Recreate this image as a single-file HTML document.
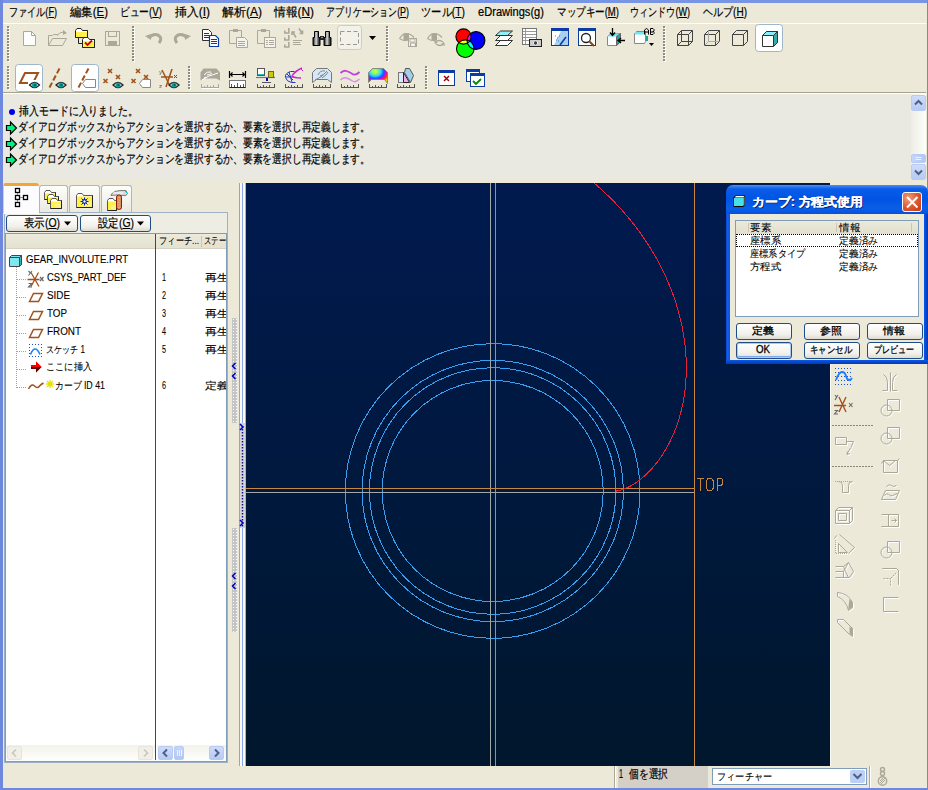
<!DOCTYPE html>
<html><head><meta charset="utf-8">
<style>
*{box-sizing:border-box}
html,body{margin:0;padding:0;width:928px;height:790px;overflow:hidden;background:#ece9d8;font-family:"Liberation Sans",sans-serif;font-size:12px;color:#000}
.a{position:absolute}
.f{position:absolute;white-space:nowrap;line-height:12px;height:12px;-webkit-text-stroke:0.2px currentColor}
.f.s{font-size:10px;-webkit-text-stroke:0.1px currentColor}
.f>span{display:inline-block;transform-origin:0 0;white-space:nowrap}
svg{position:absolute;overflow:visible}
</style></head><body>
<!-- window frame -->
<div class="a" style="left:0;top:0;width:928px;height:3px;background:#7795e2"></div>
<div class="a" style="left:0;top:0;width:3px;height:790px;background:#6d88de"></div>
<div class="a" style="left:927px;top:0;width:1px;height:790px;background:#6d88de"></div>
<div class="a" style="left:0;top:788px;width:928px;height:2px;background:#6d88de"></div>

<!-- MENU -->
<div id="menu">
<div class="f" style="left:9px;top:6px;width:48px"><span style="transform: scaleX(0.7578);">ファイル(<u>F</u>)</span></div>
<div class="f" style="left:70px;top:6px;width:38px"><span style="transform: scaleX(0.9496);">編集(<u>E</u>)</span></div>
<div class="f" style="left:120px;top:6px;width:42px"><span style="transform: scaleX(0.8074);">ビュー(<u>V</u>)</span></div>
<div class="f" style="left:175px;top:6px;width:35px"><span style="transform: scaleX(0.9903);">挿入(<u>I</u>)</span></div>
<div class="f" style="left:222px;top:6px;width:40px"><span style="transform: scaleX(0.9996);">解析(<u>A</u>)</span></div>
<div class="f" style="left:274px;top:6px;width:40px"><span style="transform: scaleX(0.9835);">情報(<u>N</u>)</span></div>
<div class="f" style="left:326px;top:6px;width:83px"><span style="transform: scaleX(0.741);">アプリケーション(<u>P</u>)</span></div>
<div class="f" style="left:421px;top:6px;width:44px"><span style="transform: scaleX(0.857);">ツール(<u>T</u>)</span></div>
<div class="f" style="left:478px;top:6px;width:66px"><span style="transform: scaleX(0.9247);">eDrawings(<u>g</u>)</span></div>
<div class="f" style="left:557px;top:6px;width:62px"><span style="transform: scaleX(0.7949);">マップキー(<u>M</u>)</span></div>
<div class="f" style="left:630px;top:6px;width:60px"><span style="transform: scaleX(0.7564);">ウィンドウ(<u>W</u>)</span></div>
<div class="f" style="left:703px;top:6px;width:44px"><span style="transform: scaleX(0.8354);">ヘルプ(<u>H</u>)</span></div>
</div>
<div class="a" style="left:3px;top:23px;width:923px;height:1px;background:#fff"></div>

<!-- TOOLBARS -->
<div id="tb">
<svg class="a" style="left:0;top:0" width="928" height="95" viewBox="0 0 928 95">
<defs>
<pattern id="grip" width="3" height="3" patternUnits="userSpaceOnUse"><rect x="1" y="1" width="2" height="2" fill="#fff"></rect><rect x="0" y="0" width="2" height="2" fill="#8e8c7e"></rect></pattern>
<g id="eye"><path d="M0 3 Q5 -2 10 3 Q5 8 0 3Z" fill="#fff" stroke="#222" stroke-width="1.3"></path><circle cx="5" cy="3" r="2.6" fill="#10a0a0"></circle><circle cx="5.5" cy="3.2" r="1.1" fill="#064"></circle></g>
<g id="ruler"><rect x="0.5" y="0.5" width="17" height="4" fill="#fff" stroke="#555"></rect><path d="M2.5 1v2M5.5 1v3M8.5 1v2M11.5 1v3M14.5 1v2" stroke="#555"></path></g>
</defs>
<!-- grippers row1 -->
<g shape-rendering="crispEdges"><rect x="8" y="27" width="2" height="2" fill="#fff"></rect><rect x="7" y="26" width="2" height="2" fill="#8e8c7e"></rect><rect x="8" y="30" width="2" height="2" fill="#fff"></rect><rect x="7" y="29" width="2" height="2" fill="#8e8c7e"></rect><rect x="8" y="33" width="2" height="2" fill="#fff"></rect><rect x="7" y="32" width="2" height="2" fill="#8e8c7e"></rect><rect x="8" y="36" width="2" height="2" fill="#fff"></rect><rect x="7" y="35" width="2" height="2" fill="#8e8c7e"></rect><rect x="8" y="39" width="2" height="2" fill="#fff"></rect><rect x="7" y="38" width="2" height="2" fill="#8e8c7e"></rect><rect x="8" y="42" width="2" height="2" fill="#fff"></rect><rect x="7" y="41" width="2" height="2" fill="#8e8c7e"></rect><rect x="8" y="45" width="2" height="2" fill="#fff"></rect><rect x="7" y="44" width="2" height="2" fill="#8e8c7e"></rect><rect x="8" y="48" width="2" height="2" fill="#fff"></rect><rect x="7" y="47" width="2" height="2" fill="#8e8c7e"></rect><rect x="8" y="51" width="2" height="2" fill="#fff"></rect><rect x="7" y="50" width="2" height="2" fill="#8e8c7e"></rect><rect x="8" y="54" width="2" height="2" fill="#fff"></rect><rect x="7" y="53" width="2" height="2" fill="#8e8c7e"></rect><rect x="8" y="57" width="2" height="2" fill="#fff"></rect><rect x="7" y="56" width="2" height="2" fill="#8e8c7e"></rect><rect x="8" y="60" width="2" height="2" fill="#fff"></rect><rect x="7" y="59" width="2" height="2" fill="#8e8c7e"></rect></g>
<g shape-rendering="crispEdges"><rect x="133" y="27" width="2" height="2" fill="#fff"></rect><rect x="132" y="26" width="2" height="2" fill="#8e8c7e"></rect><rect x="133" y="30" width="2" height="2" fill="#fff"></rect><rect x="132" y="29" width="2" height="2" fill="#8e8c7e"></rect><rect x="133" y="33" width="2" height="2" fill="#fff"></rect><rect x="132" y="32" width="2" height="2" fill="#8e8c7e"></rect><rect x="133" y="36" width="2" height="2" fill="#fff"></rect><rect x="132" y="35" width="2" height="2" fill="#8e8c7e"></rect><rect x="133" y="39" width="2" height="2" fill="#fff"></rect><rect x="132" y="38" width="2" height="2" fill="#8e8c7e"></rect><rect x="133" y="42" width="2" height="2" fill="#fff"></rect><rect x="132" y="41" width="2" height="2" fill="#8e8c7e"></rect><rect x="133" y="45" width="2" height="2" fill="#fff"></rect><rect x="132" y="44" width="2" height="2" fill="#8e8c7e"></rect><rect x="133" y="48" width="2" height="2" fill="#fff"></rect><rect x="132" y="47" width="2" height="2" fill="#8e8c7e"></rect><rect x="133" y="51" width="2" height="2" fill="#fff"></rect><rect x="132" y="50" width="2" height="2" fill="#8e8c7e"></rect><rect x="133" y="54" width="2" height="2" fill="#fff"></rect><rect x="132" y="53" width="2" height="2" fill="#8e8c7e"></rect><rect x="133" y="57" width="2" height="2" fill="#fff"></rect><rect x="132" y="56" width="2" height="2" fill="#8e8c7e"></rect><rect x="133" y="60" width="2" height="2" fill="#fff"></rect><rect x="132" y="59" width="2" height="2" fill="#8e8c7e"></rect></g>
<g shape-rendering="crispEdges"><rect x="387" y="27" width="2" height="2" fill="#fff"></rect><rect x="386" y="26" width="2" height="2" fill="#8e8c7e"></rect><rect x="387" y="30" width="2" height="2" fill="#fff"></rect><rect x="386" y="29" width="2" height="2" fill="#8e8c7e"></rect><rect x="387" y="33" width="2" height="2" fill="#fff"></rect><rect x="386" y="32" width="2" height="2" fill="#8e8c7e"></rect><rect x="387" y="36" width="2" height="2" fill="#fff"></rect><rect x="386" y="35" width="2" height="2" fill="#8e8c7e"></rect><rect x="387" y="39" width="2" height="2" fill="#fff"></rect><rect x="386" y="38" width="2" height="2" fill="#8e8c7e"></rect><rect x="387" y="42" width="2" height="2" fill="#fff"></rect><rect x="386" y="41" width="2" height="2" fill="#8e8c7e"></rect><rect x="387" y="45" width="2" height="2" fill="#fff"></rect><rect x="386" y="44" width="2" height="2" fill="#8e8c7e"></rect><rect x="387" y="48" width="2" height="2" fill="#fff"></rect><rect x="386" y="47" width="2" height="2" fill="#8e8c7e"></rect><rect x="387" y="51" width="2" height="2" fill="#fff"></rect><rect x="386" y="50" width="2" height="2" fill="#8e8c7e"></rect><rect x="387" y="54" width="2" height="2" fill="#fff"></rect><rect x="386" y="53" width="2" height="2" fill="#8e8c7e"></rect><rect x="387" y="57" width="2" height="2" fill="#fff"></rect><rect x="386" y="56" width="2" height="2" fill="#8e8c7e"></rect><rect x="387" y="60" width="2" height="2" fill="#fff"></rect><rect x="386" y="59" width="2" height="2" fill="#8e8c7e"></rect></g>
<g shape-rendering="crispEdges"><rect x="664" y="27" width="2" height="2" fill="#fff"></rect><rect x="663" y="26" width="2" height="2" fill="#8e8c7e"></rect><rect x="664" y="30" width="2" height="2" fill="#fff"></rect><rect x="663" y="29" width="2" height="2" fill="#8e8c7e"></rect><rect x="664" y="33" width="2" height="2" fill="#fff"></rect><rect x="663" y="32" width="2" height="2" fill="#8e8c7e"></rect><rect x="664" y="36" width="2" height="2" fill="#fff"></rect><rect x="663" y="35" width="2" height="2" fill="#8e8c7e"></rect><rect x="664" y="39" width="2" height="2" fill="#fff"></rect><rect x="663" y="38" width="2" height="2" fill="#8e8c7e"></rect><rect x="664" y="42" width="2" height="2" fill="#fff"></rect><rect x="663" y="41" width="2" height="2" fill="#8e8c7e"></rect><rect x="664" y="45" width="2" height="2" fill="#fff"></rect><rect x="663" y="44" width="2" height="2" fill="#8e8c7e"></rect><rect x="664" y="48" width="2" height="2" fill="#fff"></rect><rect x="663" y="47" width="2" height="2" fill="#8e8c7e"></rect><rect x="664" y="51" width="2" height="2" fill="#fff"></rect><rect x="663" y="50" width="2" height="2" fill="#8e8c7e"></rect><rect x="664" y="54" width="2" height="2" fill="#fff"></rect><rect x="663" y="53" width="2" height="2" fill="#8e8c7e"></rect><rect x="664" y="57" width="2" height="2" fill="#fff"></rect><rect x="663" y="56" width="2" height="2" fill="#8e8c7e"></rect><rect x="664" y="60" width="2" height="2" fill="#fff"></rect><rect x="663" y="59" width="2" height="2" fill="#8e8c7e"></rect></g>
<!-- grippers row2 -->
<g shape-rendering="crispEdges"><rect x="8" y="67" width="2" height="2" fill="#fff"></rect><rect x="7" y="66" width="2" height="2" fill="#8e8c7e"></rect><rect x="8" y="70" width="2" height="2" fill="#fff"></rect><rect x="7" y="69" width="2" height="2" fill="#8e8c7e"></rect><rect x="8" y="73" width="2" height="2" fill="#fff"></rect><rect x="7" y="72" width="2" height="2" fill="#8e8c7e"></rect><rect x="8" y="76" width="2" height="2" fill="#fff"></rect><rect x="7" y="75" width="2" height="2" fill="#8e8c7e"></rect><rect x="8" y="79" width="2" height="2" fill="#fff"></rect><rect x="7" y="78" width="2" height="2" fill="#8e8c7e"></rect><rect x="8" y="82" width="2" height="2" fill="#fff"></rect><rect x="7" y="81" width="2" height="2" fill="#8e8c7e"></rect><rect x="8" y="85" width="2" height="2" fill="#fff"></rect><rect x="7" y="84" width="2" height="2" fill="#8e8c7e"></rect><rect x="8" y="88" width="2" height="2" fill="#fff"></rect><rect x="7" y="87" width="2" height="2" fill="#8e8c7e"></rect></g>
<g shape-rendering="crispEdges"><rect x="189" y="67" width="2" height="2" fill="#fff"></rect><rect x="188" y="66" width="2" height="2" fill="#8e8c7e"></rect><rect x="189" y="70" width="2" height="2" fill="#fff"></rect><rect x="188" y="69" width="2" height="2" fill="#8e8c7e"></rect><rect x="189" y="73" width="2" height="2" fill="#fff"></rect><rect x="188" y="72" width="2" height="2" fill="#8e8c7e"></rect><rect x="189" y="76" width="2" height="2" fill="#fff"></rect><rect x="188" y="75" width="2" height="2" fill="#8e8c7e"></rect><rect x="189" y="79" width="2" height="2" fill="#fff"></rect><rect x="188" y="78" width="2" height="2" fill="#8e8c7e"></rect><rect x="189" y="82" width="2" height="2" fill="#fff"></rect><rect x="188" y="81" width="2" height="2" fill="#8e8c7e"></rect><rect x="189" y="85" width="2" height="2" fill="#fff"></rect><rect x="188" y="84" width="2" height="2" fill="#8e8c7e"></rect><rect x="189" y="88" width="2" height="2" fill="#fff"></rect><rect x="188" y="87" width="2" height="2" fill="#8e8c7e"></rect></g>
<g shape-rendering="crispEdges"><rect x="426" y="67" width="2" height="2" fill="#fff"></rect><rect x="425" y="66" width="2" height="2" fill="#8e8c7e"></rect><rect x="426" y="70" width="2" height="2" fill="#fff"></rect><rect x="425" y="69" width="2" height="2" fill="#8e8c7e"></rect><rect x="426" y="73" width="2" height="2" fill="#fff"></rect><rect x="425" y="72" width="2" height="2" fill="#8e8c7e"></rect><rect x="426" y="76" width="2" height="2" fill="#fff"></rect><rect x="425" y="75" width="2" height="2" fill="#8e8c7e"></rect><rect x="426" y="79" width="2" height="2" fill="#fff"></rect><rect x="425" y="78" width="2" height="2" fill="#8e8c7e"></rect><rect x="426" y="82" width="2" height="2" fill="#fff"></rect><rect x="425" y="81" width="2" height="2" fill="#8e8c7e"></rect><rect x="426" y="85" width="2" height="2" fill="#fff"></rect><rect x="425" y="84" width="2" height="2" fill="#8e8c7e"></rect><rect x="426" y="88" width="2" height="2" fill="#fff"></rect><rect x="425" y="87" width="2" height="2" fill="#8e8c7e"></rect></g>

<!-- new doc (disabled) -->
<path d="M23.5 31.5h8l4 4v10h-12z" fill="#fdfdfb" stroke="#aca899"></path><path d="M31.5 31.5v4h4" fill="none" stroke="#aca899"></path>
<!-- open folder disabled -->
<g fill="none" stroke="#aca899" stroke-width="1"><path d="M48.5 45.5v-10h4l1 -1h4v1"></path><path d="M48.5 45.5l4 -7h14l-4 7z"></path><path d="M57.5 35.5q2 -4 7 -3"></path></g><path d="M63 30l4 3l-4 2z" fill="#aca899"></path>
<!-- folder check -->
<path d="M78.5 37v6.5h4" fill="none" stroke="#222"></path>
<path d="M75.5 30.5l1.5 -2h4l1.5 2h5v7h-12z" fill="#fff" stroke="#222" stroke-width="1"></path><rect x="76" y="32" width="11" height="5.5" fill="#fff04a"></rect><path d="M75.5 37.5h12v-7" fill="none" stroke="#222" stroke-width="1"></path><path d="M82.5 39.5l1.5 -2h4l1.5 2h5v8h-12z" fill="#fff" stroke="#222" stroke-width="1"></path><rect x="83" y="41" width="11" height="6.5" fill="#fff04a"></rect><path d="M82.5 47.5h12v-8" fill="none" stroke="#222" stroke-width="1"></path>
<path d="M85 42.5l2.5 2.5l4.5 -4.5" fill="none" stroke="#c00" stroke-width="1.8"></path>
<!-- save disabled -->
<rect x="105.5" y="31.5" width="14" height="14" fill="none" stroke="#aca899"></rect><rect x="108.5" y="31.5" width="8" height="5" fill="none" stroke="#aca899"></rect><rect x="108" y="41" width="9" height="4" fill="#aca899"></rect>
<!-- undo / redo -->
<path d="M149 38 Q153 33 158 35 Q163 38 159 43" fill="none" stroke="#aca899" stroke-width="3"></path><path d="M145 36l6 -2v6z" fill="#aca899"></path>
<path d="M187 38 Q183 33 178 35 Q173 38 177 43" fill="none" stroke="#aca899" stroke-width="3"></path><path d="M191 36l-6 -2v6z" fill="#aca899"></path>
<!-- copy -->
<path d="M202.5 29.5h6l3 3v8h-9z" fill="#fff" stroke="#333"></path><path d="M204 33.5h5M204 35.5h5M204 37.5h5" stroke="#333"></path>
<path d="M209.5 35.5h6l3 3v8h-9z" fill="#fff" stroke="#0b3ba5" stroke-width="1.2"></path><path d="M211 39.5h6M211 41.5h6M211 43.5h6" stroke="#0b3ba5"></path>
<!-- paste disabled -->
<path d="M229.5 30.5h12v13h-12z" fill="none" stroke="#aca899"></path><rect x="233" y="29" width="5" height="3" fill="#aca899"></rect><path d="M236.5 37.5h8l3 3v7h-11z" fill="#f4f3ee" stroke="#aca899"></path><path d="M238 41.5h7M238 43.5h7M238 45.5h7" stroke="#aca899"></path>
<!-- paste special disabled -->
<path d="M257.5 30.5h12v13h-12z" fill="none" stroke="#aca899"></path><rect x="261" y="29" width="5" height="3" fill="#aca899"></rect><rect x="264.5" y="37.5" width="11" height="10" fill="#f4f3ee" stroke="#aca899"></rect><path d="M266 40.5h2M269 40.5h5M266 42.5h2M269 42.5h5M266 44.5h2M269 44.5h5" stroke="#aca899"></path>
<!-- checklist disabled -->
<g fill="none" stroke="#aca899" stroke-width="1.6"><path d="M284.8 30.5v2.5h4v-5M284.8 37.5v2.5h4v-5M284.8 44.5v2.5h4v-5"></path><path d="M296 37.5l-3 -5M292 35v-3h3"></path><path d="M299 28.5l3 4.5M299.5 33.5h3v-3"></path></g>
<path d="M293 40.5h9M293 42.5h7M293 44.5h8" stroke="#aca899" stroke-width="1"></path>
<!-- binoculars -->
<defs><linearGradient id="bino" x1="0" x2="1"><stop offset="0" stop-color="#111"></stop><stop offset="0.45" stop-color="#ddd"></stop><stop offset="0.7" stop-color="#666"></stop><stop offset="1" stop-color="#111"></stop></linearGradient></defs>
<path d="M314.5 31.5h4v6h1.5v8h-7v-8h1.5z" fill="url(#bino)" stroke="#000"></path>
<path d="M325.5 31.5h4v6h1.5v8h-7v-8h1.5z" fill="url(#bino)" stroke="#000"></path>
<rect x="320" y="36" width="4" height="4" fill="#222"></rect><circle cx="322" cy="37.5" r="0.8" fill="#bbb"></circle>
<!-- select box btn -->
<rect x="337.5" y="25.5" width="24" height="24" rx="3" fill="#f3f2ea" stroke="#cfccbb"></rect>
<rect x="340.5" y="31.5" width="18" height="13" fill="none" stroke="#9a988a" stroke-dasharray="4 2.5"></rect>
<path d="M369 36h7l-3.5 4z" fill="#000"></path>
<!-- eye save disabled -->
<path d="M399.5 38.5q3 -5 7 -5t7.5 4" fill="none" stroke="#aca899" stroke-width="1.2"></path><path d="M399.5 38.5q3 2 5 2" fill="none" stroke="#aca899" stroke-width="1.2"></path><path d="M403.5 33.5h5.5v6.5l-2 1h-3.5z" fill="#aca899"></path>
<rect x="408.5" y="38.5" width="8" height="8" fill="#f4f3ee" stroke="#aca899"></rect><rect x="410" y="39" width="5" height="3" fill="none" stroke="#aca899" stroke-width="0.8"></rect><path d="M410.5 46v-3h5v3" fill="none" stroke="#aca899"></path>
<path d="M427.5 38.5q3 -5 7 -5t7.5 4" fill="none" stroke="#aca899" stroke-width="1.2"></path><path d="M427.5 38.5q3 2 5 2" fill="none" stroke="#aca899" stroke-width="1.2"></path><path d="M431.5 33.5h5.5v6.5l-2 1h-3.5z" fill="#aca899"></path>
<path d="M435 42q4 -3 8 0M444 44q-4 3 -8 0" fill="none" stroke="#aca899" stroke-width="1.4"></path><path d="M434 40l1 4l3 -2zM445 46l-1 -4l-3 2z" fill="#aca899"></path>
<!-- color circles -->
<defs><clipPath id="cR"><circle cx="463.5" cy="36.5" r="7.6"></circle></clipPath><clipPath id="cB"><circle cx="476" cy="40.5" r="8.9"></circle></clipPath></defs>
<circle cx="463.5" cy="36.5" r="7.6" fill="#f00"></circle>
<circle cx="476" cy="40.5" r="8.9" fill="#00f"></circle>
<circle cx="465.3" cy="48.7" r="8.8" fill="#0f0"></circle>
<g clip-path="url(#cR)"><circle cx="476" cy="40.5" r="8.9" fill="#f0f"></circle><circle cx="465.3" cy="48.7" r="8.8" fill="#ff0"></circle></g>
<g clip-path="url(#cB)"><circle cx="465.3" cy="48.7" r="8.8" fill="#0ff"></circle><g clip-path="url(#cR)"><circle cx="465.3" cy="48.7" r="8.8" fill="#fff"></circle></g></g>
<g fill="none" stroke="#000" stroke-width="1.1"><circle cx="463.5" cy="36.5" r="7.6"></circle><circle cx="476" cy="40.5" r="8.9"></circle><circle cx="465.3" cy="48.7" r="8.8"></circle></g>
<!-- layers -->
<path d="M495.5 45.5l5 -5h12l-5 5z" fill="#fff" stroke="#333"></path><path d="M495.5 40.5l5 -5h12l-5 5z" fill="#fff" stroke="#333"></path><path d="M495.5 35.5l5 -4.5h12l-5 4.5z" fill="#90f0f8" stroke="#333"></path>
<!-- table camera -->
<rect x="522.5" y="28.5" width="14" height="16" fill="#fff" stroke="#777"></rect><path d="M523 31.5h13M523 34.5h13M523 37.5h13M523 40.5h13M525.5 29v15" stroke="#999"></path><rect x="529.5" y="39.5" width="12" height="7" fill="#ccc" stroke="#222"></rect><circle cx="535.5" cy="43" r="2.2" fill="#444" stroke="#eee"></circle>
<!-- blue window -->
<rect x="551.5" y="28.5" width="17" height="17" fill="#a8d0f0" stroke="#0b3ba5"></rect><rect x="551" y="28" width="18" height="3" fill="#0b3ba5"></rect><path d="M552 31h9l-7 14h-2z" fill="#fff"></path><path d="M560 45l6 -8" stroke="#0b3ba5" stroke-width="1.5"></path><path d="M555 36h1M557 38h1M559 36h1M556 40h1M558 41h1" stroke="#2a7ad0"></path>
<!-- zoom window -->
<rect x="578.5" y="28.5" width="17" height="17" fill="#fff" stroke="#0b3ba5"></rect><rect x="578" y="28" width="18" height="3" fill="#0b3ba5"></rect><circle cx="586" cy="38" r="4.5" fill="none" stroke="#222" stroke-width="1.3"></circle><path d="M589 41l5 5" stroke="#8b4513" stroke-width="2"></path>
<!-- arrow cube -->
<path d="M607.5 36.5l3 -3h10v8l-3.5 4h-9.5z" fill="#fff" stroke="#888"></path><path d="M607.5 36.5l3 -3h10l-3.5 3z" fill="#6ee8f0"></path><path d="M616.5 36.5l4 -3v8l-4 4z" fill="#20a0a0" stroke="#666"></path>
<path d="M612.5 28v7M610 32.5l2.5 3l2.5 -3" fill="none" stroke="#000" stroke-width="1.3"></path><path d="M625 40.5h-7M621 38l-3 2.5l3 2.5" fill="none" stroke="#000" stroke-width="1.3"></path>
<!-- AB cube -->
<path d="M634.5 33.5l2 -2h9v10l-1 2h-10z" fill="#fff" stroke="#888"></path><rect x="635" y="32" width="10" height="2.5" fill="#6ee8f0"></rect><rect x="646" y="36" width="2" height="5" fill="#20a0a0"></rect>
<path d="M644.5 34.5v-4.5l2 -1.5l2 1.5v4.5M644.5 32h4M650.5 34.5v-6h2.5l1 1v1.5l-1 1h-2.5M653 31.5l1 1v1l-1 1h-2.5" fill="none" stroke="#000" stroke-width="1"></path>
<path d="M649 43h5l-2.5 3z" fill="#000"></path>
<!-- wireframe cubes -->
<g fill="none" stroke="#444"><path d="M677.5 34.5h11v11h-11z M681.5 30.5h11v11h-11z M677.5 34.5l4 -4M688.5 34.5l4 -4M677.5 45.5l4 -4M688.5 45.5l4 -4"></path></g>
<g fill="none" stroke="#444"><path d="M704.5 34.5h11v11h-11z M704.5 34.5l4 -4h11v11l-4 4M715.5 34.5l4 -4"></path><path d="M708.5 30.5v11h11M704.5 45.5l4 -4" stroke="#aaa"></path></g>
<g fill="none" stroke="#444"><path d="M732.5 34.5h11v11h-11z M732.5 34.5l4 -4h11v11l-4 4M743.5 34.5l4 -4"></path></g>
<!-- shaded btn -->
<rect x="755.5" y="24.5" width="27" height="27" rx="3" fill="#fff" stroke="#9eb6cc"></rect>
<path d="M762.5 35.5l4 -4h11v11l-4 4h-11z" fill="#fff" stroke="#333"></path><path d="M762.5 35.5l4 -4h11l-4 4z" fill="#8ef" stroke="#333"></path><path d="M773.5 35.5l4 -4v11l-4 4z" fill="#3aa" stroke="#333"></path>

<!-- ROW 2 -->
<rect x="15.5" y="64.5" width="27" height="27" rx="3" fill="#fff" stroke="#9eb6cc"></rect>
<path d="M20 83l5 -10h13l-5 10z" fill="none" stroke="#a0521e" stroke-width="2"></path><rect x="28" y="80" width="12" height="8" fill="#fff"></rect>
<use href="#eye" x="29.5" y="82"></use>
<path d="M59.5 68.5l-10 19" stroke="#a0521e" stroke-width="2" stroke-dasharray="5.5 2.5"></path><use href="#eye" x="56" y="82"></use>
<rect x="71.5" y="64.5" width="27" height="27" rx="3" fill="#fff" stroke="#9eb6cc"></rect>
<path d="M88.5 68.5l-10 19" stroke="#a0521e" stroke-width="2" stroke-dasharray="5.5 2.5"></path><path d="M82.5 83.5l3 -4h10v8h-10z" fill="#fff" stroke="#888"></path>
<g stroke="#a0521e" stroke-width="1.6"><path d="M108 69l4 4M112 69l-4 4M116 75l4 4M120 75l-4 4M103.5 79l4 4M107.5 79l-4 4"></path></g><use href="#eye" x="113" y="82"></use>
<g stroke="#a0521e" stroke-width="1.6"><path d="M136 69l4 4M140 69l-4 4M144 75l4 4M148 75l-4 4M131.5 79l4 4M135.5 79l-4 4"></path></g><path d="M139.5 83.5l3 -4h8v8h-8z" fill="#fff" stroke="#888"></path>
<path d="M161 77h12M172 69l-6 18M162 70l8 16" stroke="#a0521e" stroke-width="1.5"></path><text x="159" y="74" font-size="6" fill="#555" font-family="Liberation Sans">y</text><text x="159" y="88" font-size="6" fill="#555" font-family="Liberation Sans">z</text><path d="M174 75l3 3M177 75l-3 3" stroke="#555"></path><use href="#eye" x="169" y="82"></use>
<!-- disabled dome ruler -->
<path d="M200.5 80.5v-8l3 -4h13l3.5 4v8l-4 -2h-12z" fill="#aca899"></path><path d="M204 75q3 -4 7 -3M207 75q3 0 5 -2M202 80q5 -4 16 -7M204 78l2 -1" fill="none" stroke="#fff" stroke-width="1"></path>
<path d="M201.5 87.5h17M201.5 84v4M204.5 86v2M207.5 85v3M210.5 86v2M213.5 85v3M218.5 84v4" stroke="#aca899" fill="none"></path><path d="M202 88.5h17" stroke="#fff"></path>
<!-- measure -->
<path d="M229.5 71v7M245.5 71v7M230 74.5h15M232.5 72.5l-2 2l2 2M242.5 72.5l2 2l-2 2" fill="none" stroke="#000" stroke-width="1.2"></path>
<rect x="229.5" y="80.5" width="16" height="7" fill="#fff" stroke="#777"></rect><path d="M229.5 87.5h16" stroke="#222"></path><path d="M231.5 84v3M234.5 85v2M237.5 83v4M240.5 85v2M243.5 84v3" stroke="#555"></path>
<!-- computer -->
<rect x="257.5" y="68.5" width="7" height="7" fill="#fff" stroke="#555"></rect><rect x="258" y="74" width="6" height="1" fill="#2bb"></rect><path d="M256 77.5h19" stroke="#777" stroke-width="1.2"></path><rect x="268.5" y="71.5" width="5" height="6" fill="#cc0" stroke="#663"></rect><path d="M267 78v3" stroke="#10a" stroke-width="2"></path><path d="M262 82.5h9" stroke="#555"></path>
<path d="M257.5 87.5h17M257.5 84v4M260.5 86v2M263.5 85v3M266.5 86v2M269.5 85v3M274.5 84v4" stroke="#555" fill="none"></path>
<!-- curve analysis -->
<path d="M290.5 71.5q-6 2 -5 6q1 4 6 5M290.5 71.5l4 0M291.5 82.5h4M287 74l6 6M286 77h8M289 72l3 10" fill="none" stroke="#1a3acc" stroke-width="1"></path><path d="M292 76q3 -5 10 -8M292 76q2 2 9 2" fill="none" stroke="#d020d0" stroke-width="1.4"></path><path d="M300 68l3 3" stroke="#d020d0"></path>
<path d="M285.5 87.5h17M285.5 84v4M288.5 86v2M291.5 85v3M294.5 86v2M297.5 85v3M302.5 84v4" stroke="#555" fill="none"></path>
<!-- blue dome -->
<path d="M312.5 82.5v-10l4 -4h11l4 4v10l-4 -3h-11z" fill="#d4e8fa" stroke="#777"></path><path d="M318 75q2 -5 7 -4M320 76q4 -1 6 -4M315 80q8 -3 12 -9M322 78q5 -3 6 -6" fill="none" stroke="#888" stroke-width="1"></path>
<path d="M313.5 87.5h17M313.5 84v4M316.5 86v2M319.5 85v3M322.5 86v2M325.5 85v3M330.5 84v4" stroke="#555" fill="none"></path>
<!-- waves -->
<path d="M340.5 73q3 -3 6 -2t6 3t7 -2" fill="none" stroke="#c040e0" stroke-width="1.8"></path><path d="M340.5 80q3 -3 6 -2t6 3t7 -2" fill="none" stroke="#d890e8" stroke-width="1.5"></path>
<path d="M341.5 87.5h17M341.5 84v4M344.5 86v2M347.5 85v3M350.5 86v2M353.5 85v3M358.5 84v4" stroke="#555" fill="none"></path>
<!-- color dome -->
<defs><radialGradient id="cdome" cx="0.35" cy="0.2" r="0.9"><stop offset="0" stop-color="#ff0"></stop><stop offset="0.18" stop-color="#7f7"></stop><stop offset="0.35" stop-color="#3cf"></stop><stop offset="0.5" stop-color="#06f"></stop><stop offset="0.62" stop-color="#c0f"></stop><stop offset="0.75" stop-color="#f30"></stop><stop offset="0.9" stop-color="#fc0"></stop></radialGradient></defs>
<path d="M368.5 82.5v-10l4 -4h11l4 4v11l-3 -4h-13z" fill="url(#cdome)" stroke="#777" stroke-width="0.8"></path>
<path d="M369.5 87.5h17M369.5 84v4M372.5 86v2M375.5 85v3M378.5 86v2M381.5 85v3M386.5 84v4" stroke="#555" fill="none"></path>
<!-- prism -->
<rect x="398.5" y="72.5" width="5" height="10" fill="#d8ecff" stroke="#777"></rect><path d="M403.5 72.5l6 10h-6z" fill="#f9a8f0" stroke="#222"></path><path d="M405.5 68.5h4l4 7l-3 7l-6 -10z" fill="#9fd0f0" stroke="#555"></path>
<path d="M397.5 87.5h17M397.5 84v4M400.5 86v2M403.5 85v3M406.5 86v2M409.5 85v3M414.5 84v4" stroke="#555" fill="none"></path>
<!-- window x -->
<rect x="438.5" y="70.5" width="16" height="15" fill="#fff" stroke="#0b3ba5"></rect><rect x="438" y="70" width="17" height="3" fill="#0b3ba5"></rect><path d="M444 76l5 5M449 76l-5 5" stroke="#a00" stroke-width="1.5"></path>
<!-- window check -->
<rect x="466.5" y="69.5" width="13" height="12" fill="#fff" stroke="#0b3ba5"></rect><rect x="466" y="69" width="14" height="3" fill="#0b3ba5"></rect><rect x="470.5" y="73.5" width="14" height="13" fill="#fff" stroke="#0b3ba5"></rect><rect x="470" y="73" width="15" height="3" fill="#0b3ba5"></rect><path d="M473 81l3 3l5 -5" fill="none" stroke="#080" stroke-width="1.8"></path>
</svg>

</div>
<div class="a" style="left:3px;top:92px;width:923px;height:1px;background:#a6a48f"></div>
<div class="a" style="left:3px;top:93px;width:923px;height:1px;background:#fff"></div>

<!-- MESSAGE AREA -->
<div class="a" style="left:3px;top:94px;width:923px;height:86px;background:#e9e9e1"></div>
<div id="msg">
<div class="a" style="left:9px;top:109px;width:6px;height:6px;border-radius:3px;background:#0000f0"></div>
<div class="f" style="left:19px;top:105px;width:119px"><span style="transform: scaleX(0.8264);">挿入モードに入りました。</span></div>
<svg class="a" style="left:5px;top:121px" width="14" height="14"><path d="M1.5 4.5h4v-3.5l6 6l-6 6v-3.5h-4z" fill="#00f080" stroke="#000" stroke-width="1.2"></path></svg>
<div class="f" style="left:18px;top:121px;width:352px"><span style="transform: scaleX(0.8148);">ダイアログボックスからアクションを選択するか、要素を選択し再定義します。</span></div>
<svg class="a" style="left:5px;top:137px" width="14" height="14"><path d="M1.5 4.5h4v-3.5l6 6l-6 6v-3.5h-4z" fill="#00f080" stroke="#000" stroke-width="1.2"></path></svg>
<div class="f" style="left:18px;top:137px;width:352px"><span style="transform: scaleX(0.8148);">ダイアログボックスからアクションを選択するか、要素を選択し再定義します。</span></div>
<svg class="a" style="left:5px;top:153px" width="14" height="14"><path d="M1.5 4.5h4v-3.5l6 6l-6 6v-3.5h-4z" fill="#00f080" stroke="#000" stroke-width="1.2"></path></svg>
<div class="f" style="left:18px;top:153px;width:352px"><span style="transform: scaleX(0.8148);">ダイアログボックスからアクションを選択するか、要素を選択し再定義します。</span></div>

<div class="a" style="left:911px;top:94px;width:15px;height:86px;background:linear-gradient(90deg,#eeede5,#fdfdfa)"></div>
<div class="a" style="left:911px;top:95px;width:15px;height:16px;border:1px solid #b8cbf2;border-radius:2px;background:linear-gradient(#cfdcfa,#b6caf5)"></div>
<svg class="a" style="left:911px;top:95px" width="15" height="16"><path d="M4 9.5l3.5 -3.5l3.5 3.5" fill="none" stroke="#4d6185" stroke-width="2"></path></svg>
<div class="a" style="left:911px;top:154px;width:15px;height:9px;border:1px solid #b8cbf2;border-radius:2px;background:linear-gradient(90deg,#c6d5f9,#b1c6f4)"></div>
<svg class="a" style="left:911px;top:154px" width="15" height="9"><path d="M4.5 3.5h6M4.5 5.5h6" stroke="#eef3fd"></path></svg>
<div class="a" style="left:911px;top:164px;width:15px;height:16px;border:1px solid #b8cbf2;border-radius:2px;background:linear-gradient(#cfdcfa,#b6caf5)"></div>
<svg class="a" style="left:911px;top:164px" width="15" height="16"><path d="M4 6.5l3.5 3.5l3.5 -3.5" fill="none" stroke="#4d6185" stroke-width="2"></path></svg>
</div>

<!-- LEFT PANEL -->
<div id="panel">
<!-- tabs -->
<div class="a" style="left:3px;top:183px;width:36px;height:30px;background:#fcfcfe;border-radius:3px 3px 0 0;border-top:3px solid #f2a53a;border-left:1px solid #c9d3df"></div>
<div class="a" style="left:39px;top:185px;width:29px;height:28px;border:1px solid #a5b8cf;border-bottom:none;border-radius:3px 3px 0 0;background:linear-gradient(#fdfdfb,#eae8df)"></div>
<div class="a" style="left:69px;top:185px;width:31px;height:28px;border:1px solid #a5b8cf;border-bottom:none;border-radius:3px 3px 0 0;background:linear-gradient(#fdfdfb,#eae8df)"></div>
<div class="a" style="left:101px;top:185px;width:31px;height:28px;border:1px solid #a5b8cf;border-bottom:none;border-radius:3px 3px 0 0;background:linear-gradient(#fdfdfb,#eae8df)"></div>
<!-- panel body -->
<div class="a" style="left:4px;top:212px;width:224px;height:551px;border:1px solid #9eb1c6;border-top:1px solid #9eb1c6;background:#eeede4"></div>
<div class="a" style="left:4px;top:212px;width:35px;height:2px;background:#fcfcfe"></div>
<!-- tab icons -->
<svg class="a" style="left:0;top:180px" width="140" height="40">
<g fill="#fff" stroke="#000" stroke-width="1.3"><rect x="15.5" y="8.5" width="4" height="4"></rect><rect x="15.5" y="15.5" width="4" height="4"></rect><rect x="23.5" y="15.5" width="4" height="4"></rect><rect x="15.5" y="22.5" width="4" height="4"></rect></g>
<path d="M17.5 13v2M17.5 20v2M20 17.5h3" stroke="#887" stroke-width="1"></path>
<path d="M44.5 12.5l1.5 -2h4l1.5 2h4v7h-11z" fill="#fff" stroke="#444" stroke-width="0.9"></path><rect x="45" y="13.5" width="10" height="5.5" fill="#fff04a"></rect><rect x="49.5" y="15.5" width="5.5" height="3.0" fill="#f8f0a0" opacity="0.8"></rect><path d="M44.5 19.5h11v-7" fill="none" stroke="#222" stroke-width="1"></path><path d="M47.5 16.5l1.5 -2h4l1.5 2h4v7h-11z" fill="#fff" stroke="#444" stroke-width="0.9"></path><rect x="48" y="17.5" width="10" height="5.5" fill="#fff04a"></rect><rect x="52.5" y="19.5" width="5.5" height="3.0" fill="#f8f0a0" opacity="0.8"></rect><path d="M47.5 23.5h11v-7" fill="none" stroke="#222" stroke-width="1"></path><path d="M50.5 20.5l1.5 -2h4l1.5 2h4v8h-11z" fill="#fff" stroke="#444" stroke-width="0.9"></path><rect x="51" y="21.5" width="10" height="6.5" fill="#fff04a"></rect><rect x="55.5" y="24.0" width="5.5" height="3.5" fill="#f8f0a0" opacity="0.8"></rect><path d="M50.5 28.5h11v-8" fill="none" stroke="#222" stroke-width="1"></path><path d="M76.5 15.5l1.5 -2h4l1.5 2h9v12h-16z" fill="#fff" stroke="#444" stroke-width="0.9"></path><rect x="77" y="16.5" width="15" height="10.5" fill="#fff04a"></rect><rect x="84.0" y="21.0" width="8.0" height="5.5" fill="#f8f0a0" opacity="0.8"></rect><path d="M76.5 27.5h16v-12" fill="none" stroke="#222" stroke-width="1"></path><path d="M80.5 21.5h8M84.5 17.5v8M81.5 18.5l6 6M87.5 18.5l-6 6" stroke="#0018e0" stroke-width="1"></path><circle cx="84.5" cy="21.5" r="1.8" fill="#fff" stroke="#0018e0" stroke-width="1.2"></circle><path d="M107.5 20.5l1.5 -2h4l1.5 2h2v10h-9z" fill="#fff" stroke="#444" stroke-width="0.9"></path><rect x="108" y="21.5" width="8" height="8.5" fill="#fff04a"></rect><rect x="111.5" y="25.0" width="4.5" height="4.5" fill="#f8f0a0" opacity="0.8"></rect><path d="M107.5 30.5h9v-10" fill="none" stroke="#222" stroke-width="1"></path><path d="M111 14.5q3 -4 9 -4h6l1.5 3l-1.5 2h-5q-4 -1 -10 0z" fill="#d8d8d8" stroke="#666" stroke-width="0.8"></path><path d="M113 13h10" stroke="#fff"></path><path d="M125 11l2 2" stroke="#0cc"></path><rect x="116.5" y="15" width="5" height="14.5" rx="2.2" fill="#d89060" stroke="#8a1a00" stroke-width="1"></rect><path d="M119 17v11" stroke="#f0c090" stroke-dasharray="1 1.5"></path>
</svg>
<!-- buttons -->
<div class="a" style="left:6px;top:215px;width:72px;height:17px;border:1px solid #1f4d87;border-radius:3px;background:linear-gradient(#ffffff,#f1f0ea 70%,#dedbcf)"></div>
<div class="a" style="left:80px;top:215px;width:71px;height:17px;border:1px solid #1f4d87;border-radius:3px;background:linear-gradient(#ffffff,#f1f0ea 70%,#dedbcf)"></div>
<div class="f" style="left:24px;top:217px;width:36px"><span style="transform: scaleX(0.8707);">表示(<u>O</u>)</span></div>
<div class="f" style="left:98px;top:217px;width:36px"><span style="transform: scaleX(0.8707);">設定(<u>G</u>)</span></div>
<svg class="a" style="left:0;top:215px" width="160" height="17"><path d="M64 6.5h7l-3.5 4z M137 6.5h7l-3.5 4z" fill="#000"></path></svg>
<!-- tree box -->
<div class="a" style="left:5px;top:233px;width:222px;height:529px;border:1px solid #7f9db9;background:#fff"></div>
<div class="a" style="left:6px;top:234px;width:150px;height:15px;background:linear-gradient(#ebeadb,#e4e1d0)"></div>
<div class="a" style="left:6px;top:248px;width:150px;height:1px;background:#d6d2c2"></div>
<div class="a" style="left:155px;top:234px;width:1px;height:526px;background:#1b4f8a"></div>
<div class="a" style="left:156px;top:234px;width:70px;height:15px;background:linear-gradient(#ebeadb,#e4e1d0)"></div><div class="a" style="left:156px;top:248px;width:70px;height:1px;background:#d6d2c2"></div>
<div class="a" style="left:201px;top:236px;width:1px;height:11px;background:#c8c6b8"></div>
<div class="f s" style="left:159px;top:235px;width:40px"><span style="transform: scaleX(0.8274);">フィーチ...</span></div>
<div class="f s" style="left:204px;top:235px;width:22px;overflow:hidden"><span style="transform: scaleX(0.7333);">ステー</span></div>
<!-- tree lines -->
<svg class="a" style="left:0;top:250px" width="160" height="150">
<path d="M16.5 17v121" stroke="#a8a48c" stroke-dasharray="1 1" fill="none"></path><path d="M17 29.5h10M17 47.5h10M17 65.5h10M17 83.5h10M17 101.5h10M17 119.5h10M17 137.5h10" stroke="#a8a48c" stroke-dasharray="1 1" fill="none"></path>
<!-- part icon -->
<path d="M9.5 7.5l2 -2h10v9l-2 2h-10z" fill="#7ee8f0" stroke="#444"></path><path d="M19.5 7.5l2 -2v9l-2 2z" fill="#3ab0b8" stroke="#444"></path><path d="M9.5 7.5h10v9" fill="none" stroke="#444"></path>
<!-- csys -->
<path d="M27.5 29.5h12M38.5 22.5l-7.5 14M31 22.5l8 14" stroke="#a0521e" stroke-width="1.3"></path><path d="M28.5 21l2 2M32 21l-3.5 4.5" stroke="#666" stroke-width="1.1" fill="none"></path><path d="M40 27l3.5 4M43.5 27l-3.5 4" stroke="#666" stroke-width="1.2"></path><path d="M28.5 33.5h3.5l-3.5 3.5h3.5" stroke="#666" fill="none" stroke-width="1.1"></path>
<!-- planes -->
<path d="M29.5 51.5l4 -8h9l-4 8z M29.5 69.5l4 -8h9l-4 8z M29.5 87.5l4 -8h9l-4 8z" fill="none" stroke="#a0521e" stroke-width="1.5"></path>
<!-- sketch -->
<g fill="#1a50d8" shape-rendering="crispEdges"><rect x="29" y="94" width="1" height="1"></rect><rect x="29" y="106" width="1" height="1"></rect><rect x="32" y="94" width="1" height="1"></rect><rect x="32" y="106" width="1" height="1"></rect><rect x="35" y="94" width="1" height="1"></rect><rect x="35" y="106" width="1" height="1"></rect><rect x="38" y="94" width="1" height="1"></rect><rect x="38" y="106" width="1" height="1"></rect><rect x="41" y="94" width="1" height="1"></rect><rect x="41" y="106" width="1" height="1"></rect><rect x="29" y="97" width="1" height="1"></rect><rect x="41" y="97" width="1" height="1"></rect><rect x="29" y="100" width="1" height="1"></rect><rect x="41" y="100" width="1" height="1"></rect><rect x="29" y="103" width="1" height="1"></rect><rect x="41" y="103" width="1" height="1"></rect></g><path d="M30.5 104.5q4.5 -11 9.5 0" fill="none" stroke="#1a80ff" stroke-width="1.6"></path>
<!-- insert arrow -->
<path d="M31 115h5v-3.5l5.5 5.5l-5.5 5.5v-3.5h-5z" fill="#f00"></path><path d="M31 117h10.5l-5.5 5.5v-3.5h-5z" fill="#600"></path><path d="M31 115h5v-3.5l5.5 5.5h-10.5z" fill="#f00"></path>
<!-- curve icon -->
<path d="M28.5 139q3 -6 6 -3t5 0q2 -2 4 -3" fill="none" stroke="#a0521e" stroke-width="1.5"></path>
<path d="M47 131l6 6M53 131l-6 6M50 130v8M46 134h8" stroke="#e8e000" stroke-width="1.3"></path>
</svg>
<div class="f s" style="left:26px;top:254px;width:102px"><span style="transform: scaleX(0.9576);">GEAR_INVOLUTE.PRT</span></div>
<div class="f s" style="left:47px;top:272px;width:79px"><span style="transform: scaleX(0.9393);">CSYS_PART_DEF</span></div>
<div class="f s" style="left:47px;top:290px;width:23px"><span style="transform: scaleX(0.9853);">SIDE</span></div>
<div class="f s" style="left:47px;top:308px;width:20px"><span style="transform: scaleX(0.9808);">TOP</span></div>
<div class="f s" style="left:47px;top:326px;width:34px"><span style="transform: scaleX(0.9868);">FRONT</span></div>
<div class="f s" style="left:46px;top:344px;width:39px"><span style="transform: scaleX(0.8067);">スケッチ 1</span></div>
<div class="f s" style="left:46px;top:361px;width:46px"><span style="transform: scaleX(0.92);">ここに挿入</span></div>
<div class="f s" style="left:55px;top:380px;width:50px"><span style="transform: scaleX(0.882);">カーブ ID 41</span></div>
<div class="f s" style="left:162px;top:272px;width:4px"><span style="transform: scaleX(0.7191);">1</span></div>
<div class="f s" style="left:162px;top:290px;width:4px"><span style="transform: scaleX(0.7191);">2</span></div>
<div class="f s" style="left:162px;top:308px;width:4px"><span style="transform: scaleX(0.7191);">3</span></div>
<div class="f s" style="left:162px;top:326px;width:4px"><span style="transform: scaleX(0.7191);">4</span></div>
<div class="f s" style="left:162px;top:344px;width:4px"><span style="transform: scaleX(0.7191);">5</span></div>
<div class="f s" style="left:162px;top:380px;width:4px"><span style="transform: scaleX(0.7191);">6</span></div>
<div class="a" style="left:205px;top:267px;width:21px;height:130px;overflow:hidden">
<div class="f s" style="left:0;top:5px;width:24px"><span style="transform: scaleX(1.2);">再生</span></div>
<div class="f s" style="left:0;top:23px;width:24px"><span style="transform: scaleX(1.2);">再生</span></div>
<div class="f s" style="left:0;top:41px;width:24px"><span style="transform: scaleX(1.2);">再生</span></div>
<div class="f s" style="left:0;top:59px;width:24px"><span style="transform: scaleX(1.2);">再生</span></div>
<div class="f s" style="left:0;top:77px;width:24px"><span style="transform: scaleX(1.2);">再生</span></div>
<div class="f s" style="left:0;top:113px;width:24px"><span style="transform: scaleX(1.2);">定義</span></div>
</div>
<!-- h scrollbars -->
<div class="a" style="left:6px;top:745px;width:149px;height:16px;background:linear-gradient(#f3f2ec,#fefefc)"></div>
<div class="a" style="left:7px;top:746px;width:15px;height:14px;border:1px solid #e6e4dc;border-radius:2px;background:#f0efe8"></div>
<svg class="a" style="left:7px;top:746px" width="15" height="14"><path d="M9 3.5l-3.5 3.5l3.5 3.5" fill="none" stroke="#c9c7ba" stroke-width="1.6"></path></svg>
<div class="a" style="left:138px;top:746px;width:15px;height:14px;border:1px solid #e6e4dc;border-radius:2px;background:#f0efe8"></div>
<svg class="a" style="left:138px;top:746px" width="15" height="14"><path d="M6 3.5l3.5 3.5l-3.5 3.5" fill="none" stroke="#c9c7ba" stroke-width="1.6"></path></svg>
<div class="a" style="left:157px;top:745px;width:69px;height:16px;background:linear-gradient(#f3f2ec,#fefefc)"></div>
<div class="a" style="left:158px;top:746px;width:15px;height:14px;border:1px solid #b8cbf2;border-radius:2px;background:linear-gradient(#cfdcfa,#b6caf5)"></div>
<svg class="a" style="left:158px;top:746px" width="15" height="14"><path d="M9 3.5l-3.5 3.5l3.5 3.5" fill="none" stroke="#4d6185" stroke-width="2"></path></svg>
<div class="a" style="left:174px;top:746px;width:10px;height:14px;border:1px solid #b8cbf2;border-radius:2px;background:linear-gradient(#c6d5f9,#b1c6f4)"></div>
<svg class="a" style="left:174px;top:746px" width="10" height="14"><path d="M3.5 4v6M5.5 4v6M7.5 4v6" stroke="#eef3fd"></path></svg>
<div class="a" style="left:209px;top:746px;width:15px;height:14px;border:1px solid #b8cbf2;border-radius:2px;background:linear-gradient(#cfdcfa,#b6caf5)"></div>
<svg class="a" style="left:209px;top:746px" width="15" height="14"><path d="M6 3.5l3.5 3.5l-3.5 3.5" fill="none" stroke="#4d6185" stroke-width="2"></path></svg>
<!-- splitter -->
<div class="a" style="left:232px;top:318px;width:5px;height:105px;background-color:#c4c4c4;background-image:linear-gradient(90deg,transparent 1px,#c4c4c4 1px,#c4c4c4 3px,transparent 3px),linear-gradient(transparent 1px,#c4c4c4 1px,#c4c4c4 3px,transparent 3px),linear-gradient(#fff,#fff);background-size:3px 3px;background-position:1px 1px"></div>

<div class="a" style="left:232px;top:528px;width:5px;height:104px;background-color:#c4c4c4;background-image:linear-gradient(90deg,transparent 1px,#c4c4c4 1px,#c4c4c4 3px,transparent 3px),linear-gradient(transparent 1px,#c4c4c4 1px,#c4c4c4 3px,transparent 3px),linear-gradient(#fff,#fff);background-size:3px 3px;background-position:1px 1px"></div>
<div class="a" style="left:239px;top:183px;width:1px;height:583px;background:#89a4e8"></div>
<div class="a" style="left:242px;top:183px;width:1px;height:583px;background:#89a4e8"></div>
<div class="a" style="left:240px;top:183px;width:2px;height:583px;background:#fbfaf2"></div>
<div class="a" style="left:243px;top:183px;width:3px;height:583px;background:#fbfaf2"></div>
<div class="a" style="left:245px;top:183px;width:1px;height:583px;background:#9cb4ee"></div>
<div class="a" style="left:240px;top:423px;width:5px;height:105px;background:#d6d6d6"></div>
<svg class="a" style="left:240px;top:423px" width="5" height="105"><path d="M2.5 3V104" stroke="#10108a" stroke-width="1.5" stroke-dasharray="1.5 1.5"></path></svg>
<svg class="a" style="left:228px;top:300px" width="20" height="330">
<g fill="#fff"><path d="M5 19h1v105h-1zM7 19h1v105h-1z" opacity="0.0"></path></g>
<path d="M7.5 63l-3 3l3 3M7.5 73l-3 3l3 3" fill="none" stroke="#0000c0" stroke-width="1.5"></path>
<path d="M12 124l3 3l-3 3M12 220l3 3l-3 3" fill="none" stroke="#0000c0" stroke-width="1.5"></path>
<path d="M7.5 273l-3 3l3 3M7.5 283l-3 3l3 3" fill="none" stroke="#0000c0" stroke-width="1.5"></path>
</svg>

</div>

<!-- GRAPHICS -->
<div class="a" style="left:246px;top:183px;width:584px;height:583px;background:linear-gradient(#001a4f,#00172d)"></div>
<div id="gfx">
<svg class="a" style="left:0;top:0;overflow:hidden" width="928" height="790">
<defs><clipPath id="gclip"><rect x="246" y="183" width="584" height="583"></rect></clipPath></defs>
<g clip-path="url(#gclip)" shape-rendering="crispEdges">
<g fill="none" stroke="#38a0f0" stroke-width="1">
<circle cx="492.7" cy="491.0" r="147.3"></circle><circle cx="492.7" cy="491.0" r="130.65"></circle><circle cx="492.7" cy="491.0" r="123.25"></circle><circle cx="492.7" cy="491.0" r="110.5"></circle>
</g>
<rect x="490" y="183" width="1" height="583" fill="#a0a8a8"></rect>
<rect x="495" y="183" width="1" height="583" fill="#c8873b"></rect>
<rect x="246" y="488" width="448" height="1" fill="#c8873b"></rect>
<rect x="246" y="492" width="448" height="1" fill="#a0a8a8"></rect>
<rect x="694" y="183" width="1" height="583" fill="#c8873b"></rect>
<polyline points="616.0,491.0 616.0,491.0 616.0,491.0 616.2,491.0 616.3,491.0 616.6,491.0 616.8,490.9 617.2,490.9 617.5,490.8 617.9,490.8 618.4,490.7 618.9,490.6 619.4,490.4 620.0,490.3 620.7,490.1 621.4,489.9 622.1,489.7 622.9,489.4 623.7,489.1 624.5,488.8 625.4,488.4 626.3,488.0 627.3,487.6 628.3,487.1 629.3,486.6 630.4,486.0 631.5,485.4 632.6,484.7 633.8,484.0 635.0,483.3 636.2,482.4 637.4,481.6 638.7,480.7 639.9,479.7 641.2,478.7 642.5,477.6 643.9,476.4 645.2,475.2 646.6,474.0 647.9,472.7 649.3,471.3 650.7,469.8 652.1,468.3 653.4,466.8 654.8,465.1 656.2,463.4 657.6,461.6 659.0,459.8 660.3,457.9 661.7,455.9 663.0,453.9 664.3,451.8 665.6,449.6 666.9,447.4 668.2,445.0 669.4,442.7 670.6,440.2 671.8,437.7 673.0,435.1 674.1,432.4 675.2,429.7 676.3,426.9 677.3,424.1 678.2,421.1 679.2,418.2 680.1,415.1 680.9,412.0 681.7,408.8 682.4,405.6 683.1,402.2 683.7,398.9 684.2,395.4 684.7,392.0 685.2,388.4 685.5,384.8 685.8,381.1 686.1,377.4 686.2,373.7 686.3,369.8 686.3,366.0 686.2,362.0 686.1,358.1 685.8,354.1 685.5,350.0 685.1,345.9 684.6,341.8 684.0,337.6 683.3,333.4 682.6,329.2 681.7,324.9 680.7,320.6 679.7,316.2 678.5,311.9 677.3,307.5 675.9,303.1 674.5,298.7 672.9,294.2 671.2,289.8 669.4,285.3 667.5,280.8 665.6,276.3 663.4,271.9 661.2,267.4 658.9,262.9 656.5,258.4 653.9,253.9 651.2,249.5 648.4,245.0 645.5,240.6 642.5,236.2 639.4,231.8 636.1,227.4 632.8,223.1 629.3,218.7 625.7,214.5 622.0,210.2 618.1,206.0 614.2,201.8 610.1,197.7 605.9,193.7 601.6,189.6 597.2,185.7 592.7,181.7 588.0,177.9 583.2,174.1 578.4,170.4 573.4,166.7 568.3,163.2 563.0,159.6 557.7,156.2" fill="none" stroke="#e8203c" stroke-width="1"></polyline>
<path d="M697 478.5h7M700.5 478.5v12.5M708 478.5h3.5l1.5 2v8l-1.5 2h-3.5l-1.5 -2v-8z M717.5 491v-12.5h4l1 1v4.5l-1 1h-4" fill="none" stroke="#c8873b" stroke-width="1"></path>
</g>
</svg>
</div>

<!-- RIGHT TOOLBAR -->
<div id="rtb">
<div class="a" style="left:830px;top:363px;width:96px;height:403px;background:#ece9d8"></div>
<div class="a" style="left:830px;top:363px;width:1px;height:403px;background:#f8f7f0"></div>
<svg class="a" style="left:0;top:0" width="928" height="790">
<g shape-rendering="crispEdges">
<path d="M832 425.5h42M832 466.5h42" stroke="#8a887a" stroke-dasharray="2 1"></path>
</g>
<!-- sketch -->
<g fill="#1a50d8" shape-rendering="crispEdges"><rect x="835.0" y="368.0" width="1" height="1"></rect><rect x="838.0" y="368.0" width="1" height="1"></rect><rect x="841.0" y="368.0" width="1" height="1"></rect><rect x="844.0" y="368.0" width="1" height="1"></rect><rect x="847.0" y="368.0" width="1" height="1"></rect><rect x="850.0" y="368.0" width="1" height="1"></rect><rect x="835.0" y="372.0" width="1" height="1"></rect><rect x="838.0" y="372.0" width="1" height="1"></rect><rect x="841.0" y="372.0" width="1" height="1"></rect><rect x="844.0" y="372.0" width="1" height="1"></rect><rect x="847.0" y="372.0" width="1" height="1"></rect><rect x="850.0" y="372.0" width="1" height="1"></rect><rect x="835.0" y="376.0" width="1" height="1"></rect><rect x="838.0" y="376.0" width="1" height="1"></rect><rect x="841.0" y="376.0" width="1" height="1"></rect><rect x="844.0" y="376.0" width="1" height="1"></rect><rect x="847.0" y="376.0" width="1" height="1"></rect><rect x="850.0" y="376.0" width="1" height="1"></rect><rect x="835.0" y="380.0" width="1" height="1"></rect><rect x="838.0" y="380.0" width="1" height="1"></rect><rect x="841.0" y="380.0" width="1" height="1"></rect><rect x="844.0" y="380.0" width="1" height="1"></rect><rect x="847.0" y="380.0" width="1" height="1"></rect><rect x="850.0" y="380.0" width="1" height="1"></rect><rect x="835.0" y="384.0" width="1" height="1"></rect><rect x="838.0" y="384.0" width="1" height="1"></rect><rect x="841.0" y="384.0" width="1" height="1"></rect><rect x="844.0" y="384.0" width="1" height="1"></rect><rect x="847.0" y="384.0" width="1" height="1"></rect><rect x="850.0" y="384.0" width="1" height="1"></rect></g>
<path d="M836 380q3 -8 6 -8t4 4t3 4t3 -2" fill="none" stroke="#1a7cff" stroke-width="1.8"></path>
<!-- csys -->
<path d="M834 405.5h12M839 397l7 15M846 397l-7 15" stroke="#a0521e" stroke-width="1.4"></path>
<path d="M835 395l1.5 2M838 395l-3 5M849 403l3.5 4M852.5 403l-3.5 4M834.5 410.5h3l-3 3.5h3.5" fill="none" stroke="#666" stroke-width="1.1"></path>
<!-- col1 greyed icons -->
<g fill="none" stroke="#fff" stroke-width="1" transform="translate(1 1)"><path d="M835.5 437.5h11v7h-11zM846.5 441.5h7l-2.5 6M850.5 448l-3.5 6M847 454.5l0.5 -3M847 454.5l3 -1"></path>
<path d="M838.5 481.5q4 0 4 4v7h6v-7q0 -4 4 -4"></path>
<path d="M835.5 510.5h14v13h-14zM838.5 513.5h8v7h-8zM835.5 510.5l3 -3h14v13l-3 3M849.5 510.5l3 -3"></path>
<path d="M838.5 543.5v9h9zM836.5 535.5l-2 3"></path><path d="M835.5 540v13.5h12" stroke-dasharray="1 1"></path><path d="M839.5 534.5l15 13l-6 6"></path>
<path d="M835.5 566.5h8l5 -4l5 9l-4 6h-14M835.5 571.5h8v6M843.5 566.5l2 5l3 6M843.5 571.5l5 -9"></path>
<path d="M837.5 592.5q11 1 15 10v5l-4 3q-2 -10 -11 -14z"></path>
<path d="M837.5 619.5h6l9 9v8l-3 -2l-12 -12z"></path>
<path d="M883.5 374.5q4 2 4 8v8M882.5 390.5h5M896.5 374.5q-4 2 -4 8v8M897.5 390.5h-5M890.5 372.5v19"></path>
<path d="M887.5 399.5h12v11h-12z"></path><circle cx="886.5" cy="410.5" r="5.5"></circle>
<path d="M887.5 427.5h12v11h-12z"></path><circle cx="886.5" cy="438.5" r="5.5"></circle>
<path d="M883.5 460.5h14v12h-14zM883.5 460.5l-2 3M897.5 460.5l2 -2M883.5 460.5l6 5l6 -5"></path>
<path d="M881.5 499.5l4 -9h14l-4 9zM884.5 495.5q2 -3 4 -1t4 1t5 -2M886.5 486.5q3 -3 5 -1t5 0"></path>
<path d="M881.5 514.5h17v12h-17M888.5 514.5v12M891.5 520.5h5M894.5 518.5l2 2l-2 2"></path>
<path d="M887.5 541.5h12v11h-12z"></path><circle cx="886.5" cy="552.5" r="5.5"></circle>
<path d="M882.5 568.5h14l2 2v14M883.5 578.5h7v7M890.5 578.5l6 -6" stroke-dasharray="2 1"></path><path d="M882.5 568.5h14l2 2v14"></path>
<path d="M883.5 597.5h15M883.5 597.5v14h15"></path></g>
<g fill="none" stroke="#aca899" stroke-width="1"><path d="M835.5 437.5h11v7h-11zM846.5 441.5h7l-2.5 6M850.5 448l-3.5 6M847 454.5l0.5 -3M847 454.5l3 -1"></path>
<path d="M838.5 481.5q4 0 4 4v7h6v-7q0 -4 4 -4"></path>
<path d="M835.5 510.5h14v13h-14zM838.5 513.5h8v7h-8zM835.5 510.5l3 -3h14v13l-3 3M849.5 510.5l3 -3"></path>
<path d="M838.5 543.5v9h9zM836.5 535.5l-2 3"></path><path d="M835.5 540v13.5h12" stroke-dasharray="1 1"></path><path d="M839.5 534.5l15 13l-6 6"></path>
<path d="M835.5 566.5h8l5 -4l5 9l-4 6h-14M835.5 571.5h8v6M843.5 566.5l2 5l3 6M843.5 571.5l5 -9"></path>
<path d="M837.5 592.5q11 1 15 10v5l-4 3q-2 -10 -11 -14z"></path>
<path d="M837.5 619.5h6l9 9v8l-3 -2l-12 -12z"></path>
<path d="M883.5 374.5q4 2 4 8v8M882.5 390.5h5M896.5 374.5q-4 2 -4 8v8M897.5 390.5h-5M890.5 372.5v19"></path>
<path d="M887.5 399.5h12v11h-12z"></path><circle cx="886.5" cy="410.5" r="5.5"></circle>
<path d="M887.5 427.5h12v11h-12z"></path><circle cx="886.5" cy="438.5" r="5.5"></circle>
<path d="M883.5 460.5h14v12h-14zM883.5 460.5l-2 3M897.5 460.5l2 -2M883.5 460.5l6 5l6 -5"></path>
<path d="M881.5 499.5l4 -9h14l-4 9zM884.5 495.5q2 -3 4 -1t4 1t5 -2M886.5 486.5q3 -3 5 -1t5 0"></path>
<path d="M881.5 514.5h17v12h-17M888.5 514.5v12M891.5 520.5h5M894.5 518.5l2 2l-2 2"></path>
<path d="M887.5 541.5h12v11h-12z"></path><circle cx="886.5" cy="552.5" r="5.5"></circle>
<path d="M882.5 568.5h14l2 2v14M883.5 578.5h7v7M890.5 578.5l6 -6" stroke-dasharray="2 1"></path><path d="M882.5 568.5h14l2 2v14"></path>
<path d="M883.5 597.5h15M883.5 597.5v14h15"></path></g>
<g fill="#aca899"><path d="M848 610l4.5 -3v-5l-3 -3z"></path><path d="M849.5 634l3 2v-8l-3 -1z"></path></g>
<path d="M835 481.5h18" stroke="#aca899" stroke-dasharray="1 1"></path>
<!-- status bar -->
<g shape-rendering="crispEdges">
<rect x="614" y="766" width="1" height="22" fill="#aca899"></rect>
<rect x="615" y="766" width="1" height="22" fill="#fff"></rect>
<rect x="618" y="766" width="90" height="22" fill="#d4d0c8"></rect>
<rect x="869" y="766" width="1" height="22" fill="#aca899"></rect>
<rect x="870" y="766" width="1" height="22" fill="#fff"></rect>
<rect x="712.5" y="768.5" width="154" height="16" fill="#fff" stroke="#7f9db9"></rect>
</g>
<rect x="850" y="770" width="15" height="13" rx="2" fill="#bccff7"></rect>
<path d="M853.5 774l4 4l4 -4" fill="none" stroke="#4d6185" stroke-width="2"></path>
<g fill="none" stroke="#aca899" stroke-width="1.4"><circle cx="882.5" cy="769.5" r="2"></circle><circle cx="882.5" cy="773.5" r="2"></circle><circle cx="882.5" cy="781" r="4.2"></circle></g>
<path d="M880 783l5 -5M881 784l4 -4M880 781l3 -3" stroke="#aca899"></path>
</svg>
<div class="f" style="left:619px;top:768px;width:4px"><span style="transform: scaleX(0.5981);">1</span></div><div class="f" style="left:629px;top:768px;width:39px"><span style="transform: scaleX(0.8125);">個を選択</span></div>
<div class="f s" style="left:717px;top:771px;width:55px"><span style="transform: scaleX(0.9167);">フィーチャー</span></div>

</div>

<!-- DIALOG -->
<div id="dlg">
<div class="a" style="left:726px;top:185px;width:202px;height:179px;border-radius:7px 7px 0 0;background:linear-gradient(#4a90f8 0px,#0a5ce8 4px,#0054e3 14px,#0a5ee6 24px,#0550dc 29px,#0852e0 100%);"></div>
<div class="a" style="left:726px;top:214px;width:202px;height:150px;background:linear-gradient(90deg,#0838b0 0,#1260f0 1px,#0a58e8 3px,#0a58e8 198px,#0838b0 202px)"></div>
<div class="a" style="left:726px;top:360px;width:202px;height:4px;background:linear-gradient(#0a58e8,#0838b0)"></div>
<div class="a" style="left:730px;top:214px;width:194px;height:146px;background:#ece9d8"></div>
<svg class="a" style="left:730px;top:190px" width="20" height="20"><path d="M3.5 7.5l2 -2h9.5v9.5l-2 2h-9.5z" fill="#000"></path><path d="M4.5 7.5l1.5 -1.5h8.5l-1.5 1.5z" fill="#fff"></path><rect x="4" y="8" width="9" height="8" fill="#48e0e8"></rect><path d="M13 8l1.5 -1.5v8l-1.5 1.5z" fill="#9a9a9a"></path></svg>
<div class="f" style="left:752px;top:196px;width:111px;color:#fff;font-weight:bold;text-shadow:1px 1px 0 #0a1a6a"><span style="transform: scaleX(1.0741);">カーブ: 方程式使用</span></div>
<div class="a" style="left:902px;top:192px;width:20px;height:20px;border:1px solid #fff;border-radius:3px;background:radial-gradient(circle at 30% 30%,#f0a080,#e05a30 50%,#c03810)"></div>
<svg class="a" style="left:902px;top:192px" width="20" height="20"><path d="M5 5l10.5 10.5M15.5 5l-10.5 10.5" stroke="#fff" stroke-width="2"></path></svg>
<!-- list box -->
<div class="a" style="left:735px;top:220px;width:184px;height:97px;border:1px solid #7f9db9;background:#fff"></div>
<div class="a" style="left:736px;top:221px;width:182px;height:13px;background:linear-gradient(#ebeadb,#e2dfcd)"></div>
<div class="a" style="left:748px;top:223px;width:1px;height:9px;background:#cbc7b8"></div>
<div class="a" style="left:836px;top:223px;width:1px;height:9px;background:#cbc7b8"></div>
<div class="a" style="left:911px;top:223px;width:1px;height:9px;background:#cbc7b8"></div>
<div class="a" style="left:736px;top:234px;width:182px;height:13px;border:1px dotted #000"></div>
<div class="f s" style="left:750px;top:222px;width:21px"><span style="transform: scaleX(1.05);">要素</span></div>
<div class="f s" style="left:839px;top:222px;width:21px"><span style="transform: scaleX(1.05);">情報</span></div>
<div class="f s" style="left:750px;top:235px;width:31px"><span style="transform: scaleX(1.0333);">座標系</span></div>
<div class="f s" style="left:750px;top:248px;width:55px"><span style="transform: scaleX(0.9167);">座標系タイプ</span></div>
<div class="f s" style="left:750px;top:261px;width:31px"><span style="transform: scaleX(1.0333);">方程式</span></div>
<div class="f s" style="left:839px;top:235px;width:39px"><span style="transform: scaleX(0.975);">定義済み</span></div>
<div class="f s" style="left:839px;top:248px;width:39px"><span style="transform: scaleX(0.975);">定義済み</span></div>
<div class="f s" style="left:839px;top:261px;width:39px"><span style="transform: scaleX(0.975);">定義済み</span></div>
<!-- buttons -->
<div class="a" style="left:736px;top:323px;width:56px;height:17px;border:1px solid #1f4d87;border-radius:3px;background:linear-gradient(#ffffff,#f1f0ea 70%,#dedbcf)"></div>
<div class="a" style="left:804px;top:323px;width:56px;height:17px;border:1px solid #1f4d87;border-radius:3px;background:linear-gradient(#ffffff,#f1f0ea 70%,#dedbcf)"></div>
<div class="a" style="left:867px;top:323px;width:56px;height:17px;border:1px solid #1f4d87;border-radius:3px;background:linear-gradient(#ffffff,#f1f0ea 70%,#dedbcf)"></div>
<div class="a" style="left:736px;top:342px;width:56px;height:17px;border:1px solid #1f4d87;border-radius:3px;background:linear-gradient(#ffffff,#f1f0ea 70%,#dedbcf);box-shadow:inset 0 0 0 1px #a8c8f8,inset 0 -2px 0 #7fa8f0"></div>
<div class="a" style="left:804px;top:342px;width:56px;height:17px;border:1px solid #1f4d87;border-radius:3px;background:linear-gradient(#ffffff,#f1f0ea 70%,#dedbcf)"></div>
<div class="a" style="left:867px;top:342px;width:56px;height:17px;border:1px solid #1f4d87;border-radius:3px;background:linear-gradient(#ffffff,#f1f0ea 70%,#dedbcf)"></div>
<div class="f s" style="left:752px;top:325px;width:22px;-webkit-text-stroke:0.3px #000"><span style="transform: scaleX(1.1);">定義</span></div>
<div class="f s" style="left:820px;top:325px;width:22px;-webkit-text-stroke:0.3px #000"><span style="transform: scaleX(1.1);">参照</span></div>
<div class="f s" style="left:883px;top:325px;width:22px;-webkit-text-stroke:0.3px #000"><span style="transform: scaleX(1.1);">情報</span></div>
<div class="f s" style="left:756px;top:344px;width:14px;-webkit-text-stroke:0.3px #000"><span style="transform: scaleX(0.9686);">OK</span></div>
<div class="f s" style="left:810px;top:344px;width:42px;-webkit-text-stroke:0.3px #000"><span style="transform: scaleX(0.84);">キャンセル</span></div>
<div class="f s" style="left:874px;top:344px;width:40px;-webkit-text-stroke:0.3px #000"><span style="transform: scaleX(0.8);">プレビュー</span></div>

</div>

<!-- STATUS -->
<div id="status"></div>

</body></html>
